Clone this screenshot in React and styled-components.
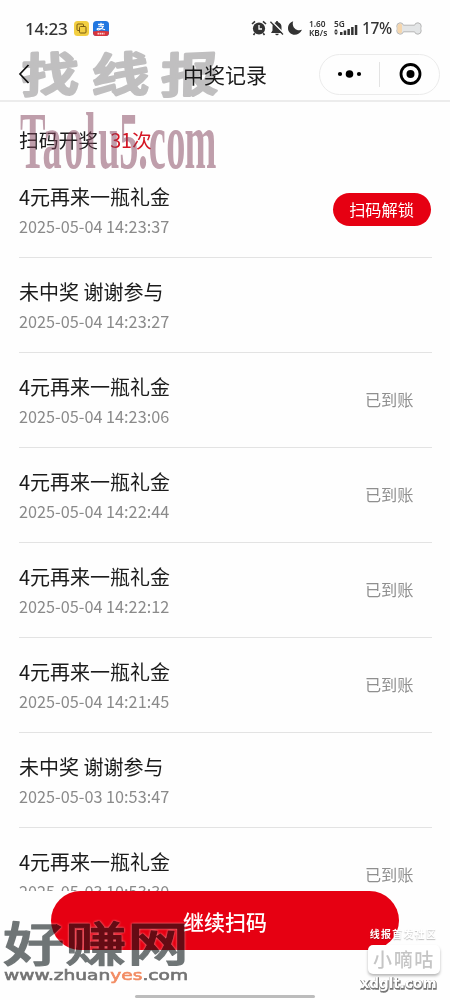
import React from 'react';
import styled, { createGlobalStyle } from 'styled-components'

const GlobalStyle = createGlobalStyle`
    * {
        box-sizing: border-box;
    }
    body {
        margin: 0;
        background: #fefefe;
        font-family: "Noto Sans CJK SC", sans-serif;
        color: #1b1b1b;
    }
`;

const Screen = styled.div`
    position: relative;
    display: flex;
    flex-direction: column;
    width: 450px;
    height: 1000px;
    overflow: hidden;
    background: #fefefe;
`;

const StatusBar = styled.div`
    display: flex;
    align-items: center;
    height: 50px;
    padding: 6px 28px 0 25px;
    font-family: "Noto Sans", sans-serif;
    color: #333;
`;

const Clock = styled.span`
    width: 43px;
    margin-right: 6px;
    font-size: 17px;
    font-weight: 500;
    letter-spacing: -0.2px;
    white-space: nowrap;
`;

const AppBadges = styled.div`
    display: flex;
    gap: 4px;
    flex: 1;
`;

const StatusIcons = styled.div`
    display: flex;
    gap: 2px;
    margin-right: 6px;
`;

const NetSpeed = styled.div`
    width: 21px;
    margin-right: 4px;
    font-size: 8.3px;
    font-weight: 600;
    line-height: 9px;
    white-space: nowrap;
`;

const Signal = styled.svg`
    overflow: visible;
`;

const Percent = styled.span`
    width: 30px;
    margin: 0 4px;
    font-size: 15.5px;
    font-weight: 500;
    letter-spacing: -0.4px;
    white-space: nowrap;
`;

const NavBar = styled.div`
    display: grid;
    grid-template-columns: 130px 1fr 130px;
    align-items: center;
    height: 52px;
    padding: 0 10px 2px;
    border-bottom: 2px solid #ececec;
`;

const BackButton = styled.button`
    display: flex;
    padding: 0 0 0 8px;
    border: 0;
    background: none;
`;

const NavTitle = styled.h1`
    margin: 0;
    padding-bottom: 1px;
    font-size: 21px;
    font-weight: 400;
    line-height: 30px;
    text-align: center;
`;

const Capsule = styled.div`
    display: flex;
    align-items: center;
    justify-self: end;
    width: 121px;
    height: 41px;
    border: 1px solid #ebebeb;
    border-radius: 21px;
`;

const CapsuleHalf = styled.div`
    display: flex;
    flex: 1;
    align-items: center;
    justify-content: center;
    height: 25px;
    border-left: ${props => props.$divided ? '1px solid #e3e3e3' : '0'};
`;

const Content = styled.main`
    height: 789px;
    padding: 0 19px;
    overflow: hidden;
`;

const Summary = styled.div`
    display: flex;
    gap: 12px;
    height: 61px;
    padding-top: 23px;
    font-size: 19.8px;
    line-height: 29px;
`;

const Count = styled.span`
    color: #d51624;
`;

const Row = styled.div`
    display: flex;
    align-items: center;
    justify-content: space-between;
    width: 412.5px;
    height: 95px;
    border-bottom: 1px solid #e3e3e3;
`;

const RowText = styled.div`
    padding-top: 5px;
`;

const RowTitle = styled.div`
    font-size: 20px;
    line-height: 28px;
`;

const RowTime = styled.div`
    font-size: 16.25px;
    line-height: 31px;
    color: #8a8a8a;
`;

const RowStatus = styled.span`
    padding: 0 18px 2px 0;
    font-size: 16.2px;
    line-height: 24px;
    color: #8f8f8f;
`;

const UnlockButton = styled.button`
    width: 98px;
    height: 33px;
    margin: 0 1px 1px 0;
    padding: 0 0 1px;
    border: 0;
    border-radius: 17px;
    background: #e60012;
    color: #fff;
    font: 400 16.2px "Noto Sans CJK SC", sans-serif;
`;

const Footer = styled.footer`
    display: flex;
    flex-direction: column;
    align-items: center;
    justify-content: space-between;
    height: 109px;
    padding: 0 0 2px;
`;

const ScanButton = styled.button`
    width: 348px;
    height: 59px;
    border: 0;
    padding: 0;
    border-radius: 30px;
    background: #e60012;
    color: #fff;
    font: 500 21px "Noto Sans CJK SC", sans-serif;
`;

const HomeIndicator = styled.div`
    width: 180px;
    height: 3px;
    border-radius: 2px;
    background: #bcbcbc;
`;

const Watermarks = styled.svg`
    position: absolute;
    top: 0;
    left: 0;
    pointer-events: none;
    mix-blend-mode: ${props => props.$blend || 'normal'};
`;

const SiteName = styled.g`
    filter: drop-shadow(0 0 .8px #fff);
    opacity: .58;
`;

const Stamp = styled.div`
    position: absolute;
    right: 10px;
    bottom: 6px;
    display: flex;
    flex-direction: column;
    align-items: flex-end;
`;

const StampTop = styled.div`
    padding-right: 3px;
    color: #fff;
    font-size: 10px;
    font-weight: 700;
    letter-spacing: 1.2px;
    line-height: 15px;
    text-shadow: 0 1px 1px rgba(0, 0, 0, .25);
`;

const StampBox = styled.div`
    width: 72px;
    height: 29px;
    margin-top: 4px;
    border-radius: 5px;
    background: #fff;
    box-shadow: 0 2px 3px rgba(0, 0, 0, .28);
    color: #c5c5c5;
    font-size: 19px;
    font-weight: 500;
    letter-spacing: 1.6px;
    line-height: 28px;
    text-align: center;
`;

const records = [
    { title: '4元再来一瓶礼金', time: '2025-05-04 14:23:37', state: 'locked' },
    { title: '未中奖 谢谢参与', time: '2025-05-04 14:23:27' },
    { title: '4元再来一瓶礼金', time: '2025-05-04 14:23:06', state: 'paid' },
    { title: '4元再来一瓶礼金', time: '2025-05-04 14:22:44', state: 'paid' },
    { title: '4元再来一瓶礼金', time: '2025-05-04 14:22:12', state: 'paid' },
    { title: '4元再来一瓶礼金', time: '2025-05-04 14:21:45', state: 'paid' },
    { title: '未中奖 谢谢参与', time: '2025-05-03 10:53:47' },
    { title: '4元再来一瓶礼金', time: '2025-05-03 10:53:30', state: 'paid' },
];

function Status () {
    return (
        <StatusBar>
            <Clock>14:23</Clock>
            <AppBadges>
                <svg width="15" height="15" viewBox="0 0 15 15">
                    <rect width="15" height="15" rx="3.5" fill="#f3cf42" />
                    <g fill="none" stroke="#7a5c12" strokeWidth="1">
                        <rect x="3" y="3" width="6.5" height="6.5" rx="1" />
                        <rect x="5.5" y="5.5" width="6.5" height="6.5" rx="1" fill="#f3cf42" />
                    </g>
                </svg>
                <svg width="16" height="15" viewBox="0 0 16 15">
                    <rect width="16" height="15" rx="3.5" fill="#2277e0" />
                    <path d="M0 10.5Q8 9 16 10.5V11.5A3.5 3.5 0 0 1 12.5 15H3.5A3.5 3.5 0 0 1 0 11.5Z" fill="#d8343c" />
                    <path d="M5 3.4H11M8 1.8V5M5.5 5.2H10.4Q9.2 8 5.6 9Q3.6 9 4.3 7.7Q6 6.5 12 8.8" fill="none" stroke="#fff" strokeWidth="1.1" />
                    <path d="M4.5 12.6H11.5" stroke="#fbd5d5" strokeWidth="1.6" strokeDasharray="1.6 .5" />
                </svg>
            </AppBadges>
            <StatusIcons>
                <svg width="16" height="16" viewBox="0 0 16 16">
                    <circle cx="8" cy="8.5" r="6.1" fill="#333" />
                    <path d="M1 4L4 1.3M12 1.3L15 4M3.8 13.2L2.5 15M12.2 13.2L13.5 15" stroke="#333" strokeWidth="1.6" />
                    <path d="M8 5V9H11" fill="none" stroke="#fff" strokeWidth="1.3" />
                </svg>
                <svg width="16" height="16" viewBox="0 0 16 16">
                    <path d="M8 1Q9.2 1 9.2 2.3Q12.5 3.2 12.5 7V10.5L14 13H2L3.5 10.5V7Q3.5 3.2 6.8 2.3Q6.8 1 8 1ZM6.2 13.8H9.8Q9.5 15.3 8 15.3Q6.5 15.3 6.2 13.8Z" fill="#333" />
                    <path d="M2.7 1.2L15 13.6" stroke="#fefefe" strokeWidth="1.5" />
                    <path d="M1.4 1.7L14 14.5" stroke="#333" strokeWidth="1.3" />
                </svg>
                <svg width="16" height="16" viewBox="0 0 16 16">
                    <path d="M6.2 1.2C4.2 6.8 9.3 11.8 15 9.7C11.3 17.7 1 15.4 1 8.2C1 4.7 3.2 2 6.2 1.2Z" fill="#333" />
                </svg>
            </StatusIcons>
            <NetSpeed>1.60<br />KB/s</NetSpeed>
            <Signal width="24" height="16" viewBox="0 0 24 16" fill="#333">
                <text x="0" y="6.5" fontFamily="Noto Sans" fontSize="8.3" fontWeight="600">5G</text>
                <path d="M0 11.5L2 9L4 11.5ZM0 12.5L2 15L4 12.5Z" />
                <rect x="6" y="12" width="2.5" height="3" />
                <rect x="9.7" y="10.5" width="2.5" height="4.5" />
                <rect x="13.4" y="9" width="2.5" height="6" />
                <rect x="17.1" y="7" width="2.5" height="8" />
                <rect x="20.8" y="5" width="2.5" height="10" />
            </Signal>
            <Percent>17%</Percent>
            <svg width="26" height="13" viewBox="0 0 26 13">
                <path d="M4 .8Q7 .8 7.4 3.2H18.6Q19 .8 22 .8Q25.3 1.2 25.2 4.2Q24.8 5.5 24.8 6.5Q24.8 7.5 25.2 8.8Q25.3 11.8 22 12.2Q19 12.2 18.6 9.8H7.4Q7 12.2 4 12.2Q.7 11.8 .8 8.8Q1.2 7.5 1.2 6.5Q1.2 5.5 .8 4.2Q.7 1.2 4 .8Z" fill="#e3e5e6" stroke="#b5b5b5" />
                <path d="M4 1.5Q5.8 1.5 6 3V10Q5.8 11.5 4 11.5Q1.3 11 1.5 9V4Q1.3 2 4 1.5Z" fill="#f5d6ad" />
            </svg>
        </StatusBar>
    )
}

function Record (props) {
    return (
        <Row>
            <RowText>
                <RowTitle>{props.record.title}</RowTitle>
                <RowTime>{props.record.time}</RowTime>
            </RowText>
            {props.record.state === 'locked' && <UnlockButton>扫码解锁</UnlockButton>}
            {props.record.state === 'paid' && <RowStatus>已到账</RowStatus>}
        </Row>
    )
}

function App () {
    return (
        <Screen>
            <GlobalStyle />
            <Status />
            <NavBar>
                <BackButton aria-label="返回">
                    <svg width="12" height="20" viewBox="0 0 12 20">
                        <path d="M10.5 1L2 10L10.5 19" fill="none" stroke="#111" strokeWidth="1.7" />
                    </svg>
                </BackButton>
                <NavTitle>中奖记录</NavTitle>
                <Capsule>
                    <CapsuleHalf>
                        <svg width="26" height="10" viewBox="0 0 26 10">
                            <circle cx="3" cy="5" r="2.1" />
                            <circle cx="12.5" cy="5" r="3.8" />
                            <circle cx="22" cy="5" r="2.1" />
                        </svg>
                    </CapsuleHalf>
                    <CapsuleHalf $divided>
                        <svg width="24" height="24" viewBox="0 0 24 24">
                            <circle cx="12.5" cy="12" r="9.5" fill="none" stroke="#000" strokeWidth="2.8" />
                            <circle cx="12.5" cy="12" r="4" />
                        </svg>
                    </CapsuleHalf>
                </Capsule>
            </NavBar>
            <Content>
                <Summary>
                    <span>扫码开奖</span>
                    <Count>31次</Count>
                </Summary>
                {records.map(record => <Record key={record.time} record={record} />)}
            </Content>
            <Footer>
                <ScanButton>继续扫码</ScanButton>
                <HomeIndicator />
            </Footer>

            <Watermarks width="450" height="180" $blend="multiply">
                <g fill="#c1c0c1" stroke="#c1c0c1" strokeWidth="3" strokeLinejoin="round" fontFamily="Noto Sans CJK SC" fontSize="52" fontWeight="500">
                    <text transform="translate(21 93) skewX(-5) scale(1.1 .9)" x="0 64 127" y="0" rotate="-3">找线报</text>
                </g>
            </Watermarks>
            <Watermarks width="450" height="180">
                <text transform="translate(20 167.5) scale(.87 1.82)" x="0 26 51 75 90 114 136 148 168 189" fontFamily="Liberation Serif" fontSize="44" fontWeight="700" fill="rgb(130, 65, 90)" opacity=".5">Taolu5.com</text>
            </Watermarks>
            <Watermarks width="450" height="1000">
                <SiteName fontFamily="Noto Sans CJK SC" fontSize="60" fontWeight="500" strokeLinejoin="round" fill="#0a1416" stroke="#0a1416" strokeWidth="1.6">
                    <text transform="translate(3 961) scale(1.02 .78)" x="0 61 122">好赚网</text>
                </SiteName>
                <text x="4" y="980" textLength="184" lengthAdjust="spacingAndGlyphs" fontFamily="DejaVu Sans" fontSize="14" fill="#737373" stroke="#737373" strokeWidth=".6">
                    www.zhuan<tspan fill="#f28b62" stroke="#f28b62">yes</tspan>.com
                </text>
            </Watermarks>
            <Stamp>
                <StampTop>线报首发社区</StampTop>
                <StampBox>小嘀咕</StampBox>
                <svg width="82" height="20" viewBox="0 0 82 20">
                    <g fontFamily="DejaVu Sans" fontSize="13.5" fontWeight="700">
                        <text x="3" y="14.5" textLength="76" fill="#666" stroke="#777" strokeWidth="1.4">xdglt.com</text>
                        <text x="2.5" y="13.5" textLength="76" fill="#fff">xdglt.com</text>
                    </g>
                </svg>
            </Stamp>
        </Screen>
    )
}

export default App
